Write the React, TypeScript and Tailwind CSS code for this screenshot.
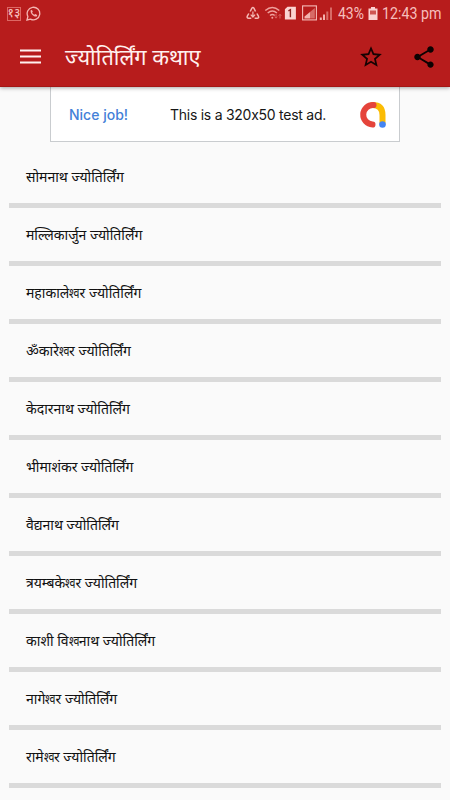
import React from 'react';

const stories = [
  'सोमनाथ ज्योतिर्लिंग',
  'मल्लिकार्जुन ज्योतिर्लिंग',
  'महाकालेश्वर ज्योतिर्लिंग',
  'ॐकारेश्वर ज्योतिर्लिंग',
  'केदारनाथ ज्योतिर्लिंग',
  'भीमाशंकर ज्योतिर्लिंग',
  'वैद्यनाथ ज्योतिर्लिंग',
  'त्रयम्बकेश्वर ज्योतिर्लिंग',
  'काशी विश्वनाथ ज्योतिर्लिंग',
  'नागेश्वर ज्योतिर्लिंग',
  'रामेश्वर ज्योतिर्लिंग',
];

function WhatsappIcon() {
  return (
    <svg className="ml-[5px] h-[15px] w-[15px]" viewBox="0 0 15 15" fill="none" stroke="#f4b5b1">
      <path d="M1 14l.9-3.5A6.3 6.3 0 1 1 4.500 13.100z" strokeWidth="1.3" />
      <path d="M4.700 4.200c-.8 3.200 3 7 6.100 6.200l.4-1.500-1.900-.9-1 .8C7.200 8.200 6.600 7.600 6.100 6.500l.7-.8L6 3.900z" fill="#f4b5b1" stroke="none" />
    </svg>
  );
}

function StatusIcons() {
  return (
    <svg className="h-[20px] w-[90px]" viewBox="245 4 90 20" fill="none">
      <g stroke="#f5b9b5" strokeWidth="1.500" strokeLinejoin="round">
        <path d="M250.200 11.500l1.700-3.300q1-1.500 2 0l1.600 3.300M248.800 13.500l-1.500 2.700q-.7 2 1.300 2h2.700M254.600 18.200h2.600q2-.1 1.200-2l-1.500-2.700" />
        <path d="M252.900 11.500v5.500M250.700 14.700l2.200 2.300 2.200-2.300" strokeWidth="1.200" />
      </g>
      <g stroke="#efa09c" strokeWidth="1.500">
        <path d="M265.300 10.500q7-6 14 0M267.700 13q4.600-4 9.200 0M270 15.500q2.400-2 4.700 0" />
        <circle cx="272.300" cy="17.700" r="1" fill="#efa09c" stroke="none" />
      </g>
      <path d="M276 14v4M274.700 16.700l1.300 1.500 1.300-1.500M280 18.500v-4M278.700 15.800l1.300-1.500 1.300 1.500" stroke="#d9615e" />
      <path d="M287.500 6.700h8.400v12.800h-11V9.300z" fill="#fbd4d2" />
      <path d="M288.400 10.900l2-1.200v7.600" stroke="#8d2422" strokeWidth="1.400" />
      <rect x="302.600" y="5.900" width="13.800" height="14" stroke="#f6bcb9" strokeWidth="1.100" />
      <path d="M304.500 18.500v-2l5.500-4.500v6.500z" fill="#f3b2ae" />
      <path d="M310 18.500V12l4.800-4v10.500z" fill="#d76b67" />
      <path d="M319.800 20v-2.500h2V20zM323 20v-5.500h2V20z" fill="#f3b2ae" />
      <path d="M326.300 20v-8.500h2V20zM330 20V7.500h2V20z" fill="#d76b67" />
    </svg>
  );
}

function StatusBar() {
  return (
    <div className="flex h-[27px] items-center pl-[7px] text-[#f6bfbc]">
      <span className="flex h-[14px] w-[14px] items-center justify-center border border-[#dd6864] text-[12px] font-medium leading-none">
        <span className="-mt-px">१३</span>
      </span>
      <WhatsappIcon />
      <div className="ml-auto flex items-center">
        <StatusIcons />
        <div className="flex w-[115px] items-center whitespace-nowrap pt-px font-[Roboto] text-[16px] leading-[20px]">
          <span className="ml-[3px] w-[30px] origin-left scale-x-[0.87]">43%</span>
          <svg className="h-[14px] w-[10px]" viewBox="0 0 10 14">
            <path d="M3 0h4v1.500h2.500V13H.5V1.500H3z" fill="#fbd2d0" />
            <path d="M2 3.500h6v4H2z" fill="#cf5652" />
          </svg>
          <span className="ml-[4px] w-[60px] origin-left scale-x-[0.89]">12:43 pm</span>
        </div>
      </div>
    </div>
  );
}

function Toolbar() {
  return (
    <div className="flex h-[60px] items-center pl-[20px]">
      <svg className="h-[16px] w-[21px]" viewBox="0 0 21 16" stroke="#fff1ef" strokeWidth="2.200">
        <path d="M0 1.500h21M0 7.500h21M0 13.500h21" />
      </svg>
      <h1 className="ml-[24px] whitespace-nowrap text-[21.800px] leading-[32px] text-[#fff0ef]">ज्योतिर्लिंग कथाए</h1>
      <svg className="ml-auto h-[26px] w-[26px]" viewBox="0 0 24 24" fill="#170303">
        <path d="M22 9.240l-7.190-.62L12 2 9.190 8.630 2 9.240l5.460 4.730L5.820 21 12 17.270 18.180 21l-1.630-7.030L22 9.240zM12 15.400l-3.760 2.270 1-4.280-3.320-2.880 4.380-.38L12 6.100l1.710 4.040 4.380.38-3.320 2.880 1 4.280L12 15.400z" />
      </svg>
      <svg className="mr-[13px] ml-[27px] h-[26px] w-[26px]" viewBox="0 0 24 24" fill="#0c0202">
        <path d="M18 16.080c-.76 0-1.440.3-1.960.77L8.910 12.700c.05-.23.09-.46.09-.7s-.04-.47-.09-.7l7.050-4.110c.54.5 1.250.81 2.040.81 1.660 0 3-1.340 3-3s-1.340-3-3-3-3 1.340-3 3c0 .24.04.47.09.7L8.040 9.810C7.500 9.310 6.790 9 6 9c-1.660 0-3 1.340-3 3s1.340 3 3 3c.79 0 1.500-.31 2.040-.81l7.120 4.160c-.05.21-.08.43-.08.65 0 1.610 1.310 2.920 2.920 2.920s2.920-1.310 2.920-2.920-1.310-2.920-2.920-2.920z" />
      </svg>
    </div>
  );
}

function AdBanner() {
  return (
    <div className="mx-auto flex h-[55px] w-[350px] items-center border border-t-0 border-[#c9cccf] bg-white pl-[18px] pt-[2px] font-[Inter] text-[14px] leading-[20px] [font-feature-settings:'calt'_0]">
      <span className="w-[101px] whitespace-nowrap font-medium text-[#4381d8]">Nice job!</span>
      <span className="whitespace-nowrap tracking-[-0.26px] text-[#161616]">This is a 320x50 test ad.</span>
      <svg className="mr-[13px] ml-auto h-[28px] w-[27px]" viewBox="0 0 27 28" fill="none" strokeLinecap="round" strokeWidth="6">
        <path d="M13.500 4Q23.500 4 23.500 14v8" stroke="#fbbc04" />
        <path d="M14.500 4A9.750 9.750 0 1 0 13.500 23.500" stroke="#e5443b" />
        <circle cx="23.500" cy="23.500" r="3.300" fill="#4384f3" />
      </svg>
    </div>
  );
}

const CONJUNCT = 'श्व';

function StoryTitle({ title }: { title: string }) {
  const [before, after] = title.split(CONJUNCT);
  if (after === undefined) return <span className="whitespace-nowrap">{title}</span>;
  return (
    <span className="whitespace-nowrap">
      {before}
      <span className="-mr-[3.500px] inline-block origin-left scale-x-[0.76]">{CONJUNCT}</span>
      {after}
    </span>
  );
}

export default function App() {
  return (
    <div className="h-[800px] w-[450px] overflow-hidden bg-[#fafafa] font-['Noto_Sans','Noto_Sans_Devanagari',sans-serif]">
      <header className="relative h-[87px] border-b border-[#a31715] bg-[#b71c1c] shadow-[0_1px_4px_rgba(0,0,0,0.35)]">
        <StatusBar />
        <Toolbar />
      </header>
      <AdBanner />
      <ul className="mx-[9px] mt-[8px]">
        {stories.map((story) => (
          <li key={story} className="flex h-[58px] items-center border-b-[5px] border-[#dadada] pl-[17px] pt-px text-[14px] leading-[24px] text-[#111]">
            <StoryTitle title={story} />
          </li>
        ))}
      </ul>
    </div>
  );
}
